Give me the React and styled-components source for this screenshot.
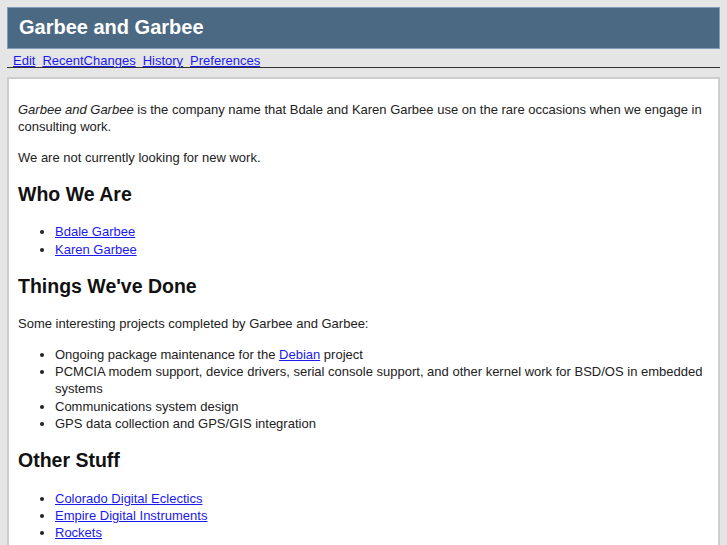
import React from "react";
import styled, { createGlobalStyle } from "styled-components";

const GlobalStyle = createGlobalStyle`
  html, body {
    margin: 0;
    padding: 0;
    background: #e5e5e5;
  }
  body {
    font-family: "Liberation Sans", Arial, Helvetica, sans-serif;
    font-size: 13px;
    color: #222;
  }
`;

const Page = styled.div`
  padding: 7px 7px 0 7px;
`;

const Header = styled.h1`
  margin: 0;
  background-color: #4b6983;
  border: 1px solid #7e9bb8;
  color: #fff;
  font-size: 20px;
  font-weight: bold;
  line-height: 24px;
  padding: 7px 11px 9px;
`;

const Nav = styled.div`
  margin-top: 6px;
  padding-left: 6px;
  line-height: 12px;
  border-bottom: 1px solid #333;
  display: flex;
  gap: 7px;
`;

const NavLink = styled.a`
  color: #1a1aee;
  text-decoration: underline;
`;

const Content = styled.div`
  margin-top: 9px;
  background: #fff;
  border: 2px solid #cdcdcd;
  padding: 9px 9px 0;
  line-height: 17.3px;
`;

const Para = styled.p`
  margin: 13px 0;
`;

const Heading = styled.h2`
  font-size: 19.5px;
  font-weight: bold;
  color: #111;
  margin: 17px 0 18.5px;
  line-height: 22px;
`;

const List = styled.ul`
  margin: 13px 0;
  padding-left: 37px;
  list-style: disc;
`;

const Link = styled.a`
  color: #1a1aee;
  text-decoration: underline;
`;

export default function App() {
  return (
    <Page>
      <GlobalStyle />
      <Header>Garbee and Garbee</Header>
      <Nav>
        <NavLink href="#">Edit</NavLink>
        <NavLink href="#">RecentChanges</NavLink>
        <NavLink href="#">History</NavLink>
        <NavLink href="#">Preferences</NavLink>
      </Nav>
      <Content>
        <Para>
          <em>Garbee and Garbee</em> is the company name that Bdale and Karen
          Garbee use on the rare occasions when we engage in consulting work.
        </Para>
        <Para>We are not currently looking for new work.</Para>
        <Heading>Who We Are</Heading>
        <List>
          <li><Link href="#">Bdale Garbee</Link></li>
          <li><Link href="#">Karen Garbee</Link></li>
        </List>
        <Heading>Things We've Done</Heading>
        <Para>Some interesting projects completed by Garbee and Garbee:</Para>
        <List>
          <li>
            Ongoing package maintenance for the <Link href="#">Debian</Link> project
          </li>
          <li>
            PCMCIA modem support, device drivers, serial console support, and
            other kernel work for BSD/OS in embedded systems
          </li>
          <li>Communications system design</li>
          <li>GPS data collection and GPS/GIS integration</li>
        </List>
        <Heading>Other Stuff</Heading>
        <List>
          <li><Link href="#">Colorado Digital Eclectics</Link></li>
          <li><Link href="#">Empire Digital Instruments</Link></li>
          <li><Link href="#">Rockets</Link></li>
        </List>
      </Content>
    </Page>
  );
}
